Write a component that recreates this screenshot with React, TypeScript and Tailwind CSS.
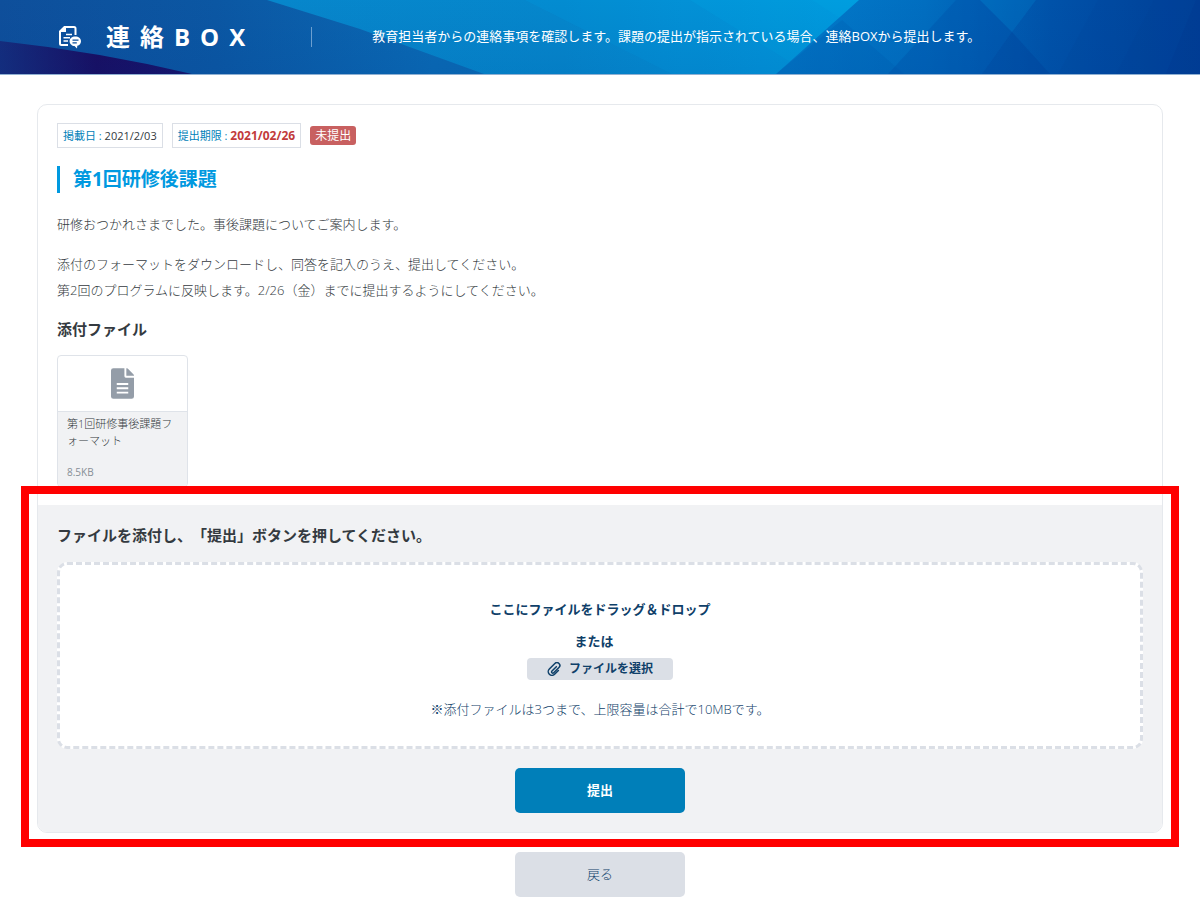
import { useRef } from 'react';

function HeaderBackground() {
  return (
    <svg
      className="absolute inset-0 h-full w-full"
      viewBox="0 0 1200 74"
      preserveAspectRatio="none"
      aria-hidden="true"
    >
      <defs>
        <linearGradient id="base" x1="0" x2="1" y1="0" y2="0">
          <stop offset="0" stopColor="#0e4f9b" />
          <stop offset="0.18" stopColor="#0b57a3" />
          <stop offset="0.36" stopColor="#0a6ab5" />
          <stop offset="1" stopColor="#0466b4" />
        </linearGradient>
        <linearGradient id="navy" x1="0" x2="1" y1="0" y2="0">
          <stop offset="0" stopColor="#152c7c" />
          <stop offset="0.5" stopColor="#190c60" />
          <stop offset="1" stopColor="#17126a" />
        </linearGradient>
        <linearGradient id="sky" x1="0" x2="1" y1="0" y2="0">
          <stop offset="0" stopColor="#0786cb" />
          <stop offset="0.5" stopColor="#0587cc" />
          <stop offset="1" stopColor="#0296db" />
        </linearGradient>
        <linearGradient id="right" x1="0" x2="1" y1="0" y2="0">
          <stop offset="0" stopColor="#027ccb" />
          <stop offset="0.35" stopColor="#016ec0" />
          <stop offset="0.65" stopColor="#0052a9" />
          <stop offset="1" stopColor="#003f98" />
        </linearGradient>
        <linearGradient id="shade" x1="0" x2="0" y1="0" y2="1">
          <stop offset="0" stopColor="#003a90" stopOpacity="0" />
          <stop offset="1" stopColor="#003a90" stopOpacity="0.12" />
        </linearGradient>
      </defs>
      <rect width="1200" height="74" fill="url(#base)" />
      <path d="M0 41Q100 52 192 74H0Z" fill="url(#navy)" />
      <path d="M267 0L360 29L484 74H800L860 0Z" fill="url(#sky)" />
      <path d="M525 0L672 74H800L860 0Z" fill="#00a0e4" fillOpacity="0.22" />
      <path d="M690 0L800 68L860 0Z" fill="#00a8e8" fillOpacity="0.2" />
      <path d="M812 0L843 20L860 0Z" fill="#00a8e8" fillOpacity="0.2" />
      <path d="M859 0L776 74H1200V0Z" fill="url(#right)" />
      <path d="M842 20L776 74H904Z" fill="#0060b4" fillOpacity="0.3" />
      <path d="M956 0L888 74H982L1012 32L980 0Z" fill="#004fa8" fillOpacity="0.35" />
      <path d="M1012 32L982 74H1050Z" fill="#003f98" fillOpacity="0.35" />
      <path d="M1036 0L1012 32L980 0Z" fill="#0080cc" fillOpacity="0.3" />
      <path d="M1098 0L1058 74H1200V0Z" fill="#003f98" fillOpacity="0.12" />
      <path d="M1154 0L1116 74H1200V0Z" fill="#003f98" fillOpacity="0.2" />
      <path d="M1196 0L1166 74H1200V0Z" fill="#00328e" fillOpacity="0.2" />
      <rect width="1200" height="74" fill="url(#shade)" />
    </svg>
  );
}

function BoxIcon() {
  return (
    <svg className="h-6 w-6" viewBox="0 0 24 24" fill="none" aria-hidden="true">
      <path
        d="M10 20H3.5Q2 20 2 18.500V6.500L6.500 2H16Q17.500 2 17.500 3.500V10"
        stroke="#fff"
        strokeWidth="2"
      />
      <path d="M2 7V6L6 2H8V7Z" fill="#fff" />
      <path d="M8 9.500H14M5.500 12.800H12M5.500 16H10" stroke="#fff" strokeWidth="1.600" />
      <path
        d="M17.300 11.500C14 11.500 11.600 13.600 11.600 16.200S14 21 16.500 21L19 23.500L19.300 20.800C21.600 20.200 23 18.400 23 16.200C23 13.600 20.600 11.500 17.300 11.500Z"
        fill="#fff"
      />
      <path d="M14.500 15.200H20.500M14.500 17.800H18.800" stroke="#0d4f9b" strokeWidth="1.200" />
    </svg>
  );
}

function FileIcon() {
  return (
    <svg className="h-[31px] w-[23px]" viewBox="0 0 384 512" fill="#949da8" aria-hidden="true">
      <path d="M224 136V0H40Q0 0 0 40V472Q0 512 40 512H344Q384 512 384 472V160H248Q224 160 224 136Z" />
      <path d="M384 122V128H256V0H262Q272 0 279 7L377 105Q384 112 384 122Z" />
      <path d="M96 264H288M96 336H288M96 408H288" stroke="#fff" strokeWidth="32" />
    </svg>
  );
}

function ClipIcon() {
  return (
    <svg
      className="h-[14px] w-[14px]"
      viewBox="0 0 24 24"
      fill="none"
      stroke="currentColor"
      strokeWidth="2.600"
      strokeLinecap="round"
      aria-hidden="true"
    >
      <path d="M16 8L8.500 15.500A2.100 2.100 0 0 0 11.500 18.500L20.500 9.500A4.900 4.900 0 0 0 13.500 2.500L4 12A6.300 6.300 0 0 0 13 21L19.500 14.500" />
    </svg>
  );
}

export default function App() {
  const fileInput = useRef<HTMLInputElement>(null);

  return (
    <div className="bg-white font-['Open_Sans','Noto_Sans_CJK_JP',sans-serif] text-[13px] font-light text-[#343a40] [text-spacing-trim:space-all]">
      <header className="relative border-b border-[#8fb0d2]">
        <HeaderBackground />
        <div className="relative flex h-[74px] items-center pl-[58px] text-white">
          <BoxIcon />
          <h1 className="ml-6 text-2xl font-bold tracking-[10px]">連絡BOX</h1>
          <span className="ml-14 h-5 w-px bg-[#6c9fd0]" />
          <p className="ml-[60px] font-normal">
            教育担当者からの連絡事項を確認します。課題の提出が指示されている場合、連絡BOXから提出します。
          </p>
        </div>
      </header>

      <main className="px-[37px] pt-[29px] pb-[9px]">
        <article className="rounded-[10px] border border-[#e6e9ed]">
          <div className="px-[19px] py-[18px]">
            <div className="flex items-center gap-[9px] text-[11px] font-normal">
              <p className="border border-[#dbdfe6] px-[5px] leading-[23px]">
                <span className="text-[#007fb9]">掲載日 : </span>2021/2/03
              </p>
              <p className="border border-[#dbdfe6] px-[5px] leading-[23px]">
                <span className="text-[#007fb9]">提出期限 : </span>
                <strong className="text-xs leading-none font-bold text-[#c23b3b]">2021/02/26</strong>
              </p>
              <span className="rounded-[3px] bg-[#c86060] px-[5px] text-xs leading-[19px] text-white">
                未提出
              </span>
            </div>

            <h2 className="mt-[18px] border-l-[3px] border-[#0099e0] pl-[13px] text-[19px] leading-[27px] font-bold text-[#0099e0]">
              第1回研修後課題
            </h2>

            <p className="mt-[18px] leading-[26px]">
              研修おつかれさまでした。事後課題についてご案内します。
            </p>
            <p className="mt-[14px] leading-[26px]">
              添付のフォーマットをダウンロードし、同答を記入のうえ、提出してください。
              <br />
              第2回のプログラムに反映します。2/26（金）までに提出するようにしてください。
            </p>

            <h3 className="mt-[14px] text-[15px] leading-[24px] font-bold">添付ファイル</h3>
            <a
              href="#format"
              className="mt-[14px] block w-[131px] overflow-hidden rounded-[4px] border border-[#dfe3e9]"
            >
              <span className="flex h-[55px] items-center justify-center">
                <FileIcon />
              </span>
              <span className="block border-t border-[#dfe3e9] bg-[#f1f2f4] px-[9px] pt-[3px] pb-[5px] text-[11px] leading-[17px]">
                第1回研修事後課題フォーマット
                <span className="mt-[15px] block text-[10px] font-normal text-[#868e96]">8.5KB</span>
              </span>
            </a>
          </div>

          <section className="relative rounded-b-[9px] bg-[#f1f2f4] px-[19px] pt-[17px] pb-[19px]">
            <h3 className="text-[15px] leading-[26px] font-bold">
              ファイルを添付し、「提出」ボタンを押してください。
            </h3>
            <div className="mt-[14px] flex flex-col items-center rounded-[10px] border-[3px] border-dashed border-[#dbdfe6] bg-white pt-[31px] pb-[24px] text-[#0f4069]">
              <p className="leading-[26px] font-bold">ここにファイルをドラッグ＆ドロップ</p>
              <p className="mt-[6px] mr-3 leading-[26px] font-bold">または</p>
              <input ref={fileInput} type="file" multiple className="hidden" aria-label="ファイルを選択" />
              <button
                type="button"
                onClick={() => fileInput.current?.click()}
                className="mt-1 flex items-center gap-2 rounded-[4px] bg-[#dbdfe6] px-5 text-xs leading-[22px] font-bold"
              >
                <ClipIcon />
                ファイルを選択
              </button>
              <p className="mt-4 leading-[26px]">※添付ファイルは3つまで、上限容量は合計で10MBです。</p>
            </div>
            <button
              type="submit"
              className="mx-auto mt-[19px] block w-[170px] rounded-[5px] bg-[#007fb9] leading-[45px] font-bold text-white"
            >
              提出
            </button>
            <div className="pointer-events-none absolute -top-[19px] -right-[17px] -bottom-[15px] -left-[17px] border-8 border-[#ff0000]" />
          </section>
        </article>

        <button
          type="button"
          className="mx-auto mt-[19px] block w-[170px] rounded-[5px] bg-[#dbdfe6] leading-[45px] text-[#0f4069]"
        >
          戻る
        </button>
      </main>
    </div>
  );
}
